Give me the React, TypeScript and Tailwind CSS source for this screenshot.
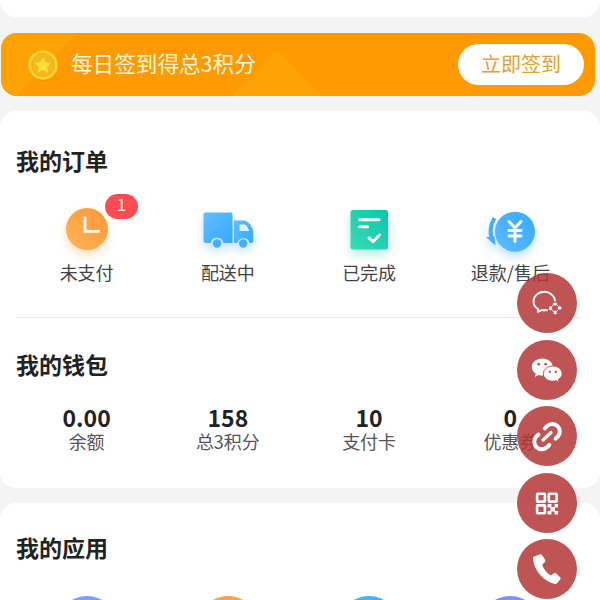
import type { ReactNode } from 'react';

interface OrderEntry {
  label: string;
  icon: ReactNode;
  badge?: number;
}

function ClockIcon() {
  return (
    <svg viewBox="0 0 60 60" className="h-[60px] w-[60px] overflow-visible">
      <defs>
        <linearGradient id="clock" x1="1" y1="0" x2="0" y2="1">
          <stop offset="0" stopColor="#ff9838" />
          <stop offset="1" stopColor="#ffb35a" />
        </linearGradient>
      </defs>
      <circle cx="30" cy="29" r="21" fill="url(#clock)" className="drop-shadow-[0_5px_5px_rgba(255,160,70,0.35)]" />
      <path d="M28 18v13.3h13.5" fill="none" stroke="#fff" strokeWidth="2.8" strokeLinecap="round" />
    </svg>
  );
}

function TruckIcon() {
  return (
    <svg viewBox="0 0 60 60" className="h-[60px] w-[60px] overflow-visible">
      <defs>
        <linearGradient id="truck" x1="0" y1="0" x2="1" y2="1">
          <stop offset="0" stopColor="#62bfff" />
          <stop offset="1" stopColor="#35a9fb" />
        </linearGradient>
      </defs>
      <g className="drop-shadow-[0_5px_5px_rgba(70,170,255,0.35)]">
        <path
          d="M7.5 12.5h25a2 2 0 0 1 2 2V43H25.5a6.5 6.5 0 0 0-12.8 0H7.5a2 2 0 0 1-2-2V14.5a2 2 0 0 1 2-2z"
          fill="url(#truck)"
        />
        <path
          fillRule="evenodd"
          d="M36 20.5h9.5c5 0 9.8 7 9.8 12V41a2 2 0 0 1-2 2h-1.5a6.5 6.5 0 0 0-12.5 0H36zM41.500 24.500v6.500h9.500c-1-4-3-6.500-5.500-6.500z"
          fill="url(#truck)"
        />
        <circle cx="19" cy="43.5" r="4.2" fill="#42afff" />
        <circle cx="45.2" cy="43.5" r="4.2" fill="#42afff" />
      </g>
    </svg>
  );
}

function DoneIcon() {
  return (
    <svg viewBox="0 0 60 60" className="h-[60px] w-[60px] overflow-visible">
      <defs>
        <linearGradient id="done" x1="1" y1="0" x2="0" y2="1">
          <stop offset="0" stopColor="#0fc5a8" />
          <stop offset="1" stopColor="#37dbb9" />
        </linearGradient>
      </defs>
      <rect x="11.5" y="10" width="37.5" height="39.5" rx="2.5" fill="url(#done)" className="drop-shadow-[0_5px_5px_rgba(40,210,175,0.35)]" />
      <path
        d="M20.500 19.700h19.500M20.500 26.800h8M30 37.800l4.200 3.700 6.300-6.500"
        fill="none"
        stroke="#fff"
        strokeWidth="3"
        strokeLinecap="round"
        strokeLinejoin="round"
      />
    </svg>
  );
}

function RefundIcon() {
  return (
    <svg viewBox="0 0 60 60" className="h-[60px] w-[60px] overflow-visible">
      <defs>
        <linearGradient id="refund" x1="1" y1="0" x2="0" y2="1">
          <stop offset="0" stopColor="#38a9fd" />
          <stop offset="1" stopColor="#5bbcff" />
        </linearGradient>
      </defs>
      <g className="drop-shadow-[0_5px_5px_rgba(70,170,255,0.35)]">
        <circle cx="35" cy="31.7" r="20" fill="url(#refund)" />
        <path d="M14.500 18c-4.500 7-5 16-1.800 22.500" fill="none" stroke="#45afff" strokeWidth="4" />
        <path d="M6 37l8.500-.5 1 9z" fill="#45afff" />
      </g>
      <path
        d="M29 21.500l6 6.500 6-6.500M35 28v13.500M29 30.500h12M29 36h12"
        fill="none"
        stroke="#fff"
        strokeWidth="2.9"
        strokeLinecap="round"
      />
    </svg>
  );
}

function CoinIcon() {
  return (
    <svg viewBox="0 0 32 32" className="h-8 w-8">
      <circle cx="16" cy="17.2" r="14.5" fill="#e98c00" opacity="0.5" />
      <circle cx="16" cy="16" r="14.8" fill="#fbd12c" />
      <circle cx="16" cy="16" r="11.3" fill="#f5b824" stroke="#eda91c" />
      <path
        d="M16 8.800l2.300 4.800 5.200.700-3.800 3.600.900 5.200-4.600-2.500-4.600 2.500.900-5.200-3.800-3.600 5.200-.700z"
        fill="#ffdf38"
        stroke="#ffdf38"
        strokeLinejoin="round"
      />
    </svg>
  );
}

function ChatIcon() {
  return (
    <svg viewBox="0 0 60 60" className="h-full w-full" fill="none" stroke="#fff">
      <path
        d="M38 27.500c-.9-5.200-5.300-8.700-10.500-8.700-6.200 0-11 4.300-11 9.700 0 3.200 1.700 5.900 4.600 7.600l-.3 2.700 3.700-1.600h5.500"
        strokeWidth="1.9"
        strokeLinecap="round"
        strokeLinejoin="round"
      />
      <g fill="#fff" stroke="none">
        <ellipse cx="38" cy="31" rx="2.2" ry="1.6" />
        <ellipse cx="33.5" cy="35.3" rx="1.6" ry="2" />
        <ellipse cx="42.6" cy="34.9" rx="2" ry="1.6" />
        <ellipse cx="38.2" cy="39.6" rx="1.6" ry="2" />
      </g>
      <path d="M34.500 33.500l1.800-1.500M40 31.800l1.500 1.700M41.300 36.800l-1.800 1.700M36.700 38.500l-1.900-1.500" strokeWidth="0.9" />
    </svg>
  );
}

function WechatIcon() {
  return (
    <svg viewBox="0 0 60 60" className="h-full w-full" fill="#fff">
      <path d="M25.300 18.500c-5.900 0-10.500 3.800-10.500 8.600 0 2.800 1.500 5.100 4 6.700l-1 3.200 3.700-2c1.300.4 2.400.6 3.800.6 5.900 0 10.500-3.800 10.500-8.500s-4.600-8.600-10.500-8.600z" />
      <path
        d="M35.700 26c-5.200 0-9.300 3.400-9.300 7.600s4.100 7.600 9.300 7.600c1.200 0 2.300-.2 3.300-.5l3.200 1.800-.8-2.900c2.300-1.400 3.700-3.500 3.700-6 0-4.200-4.200-7.600-9.400-7.600z"
        stroke="#c15656"
        strokeWidth="1"
      />
      <g fill="#c15656">
        <circle cx="21.7" cy="24.2" r="1.4" />
        <circle cx="28.7" cy="24.2" r="1.4" />
        <circle cx="32.7" cy="31.8" r="1.2" />
        <circle cx="38.8" cy="31.8" r="1.2" />
      </g>
    </svg>
  );
}

function LinkIcon() {
  return (
    <svg viewBox="0 0 60 60" className="h-full w-full" fill="none" stroke="#fff" strokeWidth="4" strokeLinecap="round">
      <path d="M27.800 22.300l2.400-2.400a7.500 7.500 0 0 1 10.600 10.600l-2.200 2.200" />
      <path d="M21.500 28.500l-2.200 2.200a7.500 7.500 0 0 0 10.600 10.600l2.400-2.400" />
      <path d="M26 34l8-7.500" strokeWidth="3.2" />
    </svg>
  );
}

function QrIcon() {
  return (
    <svg viewBox="0 0 60 60" className="h-full w-full">
      <g fill="none" stroke="#fff" strokeWidth="2.6">
        <rect x="20.1" y="20.8" width="7.8" height="7.8" rx="0.5" />
        <rect x="31.8" y="20.8" width="7.8" height="7.8" rx="0.5" />
        <rect x="20.1" y="32.4" width="7.8" height="7.8" rx="0.5" />
      </g>
      <path
        fill="#fff"
        d="M30.500 31h4v3.500h-4zM37.500 31h3.500v3.500h-3.500zM33.500 34h4.500v4.500h-4.500zM30.500 38h4v3.500h-4zM37.500 38h3.500v3.500h-3.500z"
      />
    </svg>
  );
}

function PhoneIcon() {
  return (
    <svg viewBox="0 0 60 60" className="h-full w-full" fill="#fff">
      <path d="M17 17.500l6.300-2.300c.6-.2 1.200 0 1.500.6l3.500 5.300c.4.600.3 1.200-.2 1.700l-3 2.900c1.800 4.700 4.600 8.200 8.800 10.800l3.300-2.300c.6-.4 1.300-.4 1.800.1l4.300 4.200c.5.500.5 1.200.1 1.800l-3.600 4.200c-.5.600-1.300.7-2.100.5C25.800 41.300 16.800 31.500 16 19.200c-.1-.8.300-1.400 1-1.700z" />
    </svg>
  );
}

const orders: OrderEntry[] = [
  { label: '未支付', icon: <ClockIcon />, badge: 1 },
  { label: '配送中', icon: <TruckIcon /> },
  { label: '已完成', icon: <DoneIcon /> },
  { label: '退款/售后', icon: <RefundIcon /> },
];

const wallet = [
  { value: '0.00', label: '余额' },
  { value: '158', label: '总3积分' },
  { value: '10', label: '支付卡' },
  { value: '0', label: '优惠券' },
];

const apps = ['bg-[#809dfb]', 'bg-[#ffa04a]', 'bg-[#42b2fb]', 'bg-[#8190f8]'];

const contacts = [
  { name: 'chat', icon: <ChatIcon /> },
  { name: 'wechat', icon: <WechatIcon /> },
  { name: 'link', icon: <LinkIcon /> },
  { name: 'qrcode', icon: <QrIcon /> },
  { name: 'phone', icon: <PhoneIcon /> },
];

function SectionTitle({ children }: { children: ReactNode }) {
  return <h2 className="text-[23px] leading-8 font-bold text-[#222]">{children}</h2>;
}

export default function App() {
  return (
    <div className="relative flex h-[600px] w-[600px] flex-col overflow-hidden bg-[#f4f4f4] font-['Noto_Sans_CJK_SC',sans-serif]">
      <div className="h-[17px] shrink-0 rounded-b-2xl bg-white" />

      {/* Daily check-in banner */}
      <div className="relative mt-4 mr-[5px] ml-px flex h-[63px] shrink-0 items-center overflow-hidden rounded-2xl bg-[#ff9a03] pr-[11px] pl-[26px]">
        <svg viewBox="0 0 594 63" className="absolute inset-0 h-full w-full" fill="#ffa206">
          <path d="M0 0h76L15 63H0zM231 63l45-46 45 46z" />
        </svg>
        <div className="relative flex flex-1 items-center">
          <CoinIcon />
          <span className="ml-3 pb-[3px] text-[21.6px] leading-8 text-[#fff6d8]">每日签到得总3积分</span>
        </div>
        <button type="button" className="relative h-[41px] w-[126px] rounded-full bg-white pb-px text-[20px] leading-8 text-[#e5a02c]">
          立即签到
        </button>
      </div>

      {/* Orders and wallet */}
      <section className="mt-[15px] h-[377px] shrink-0 rounded-2xl bg-white pt-[33px] pr-[19px] pl-4">
        <SectionTitle>我的订单</SectionTitle>
        <div className="mt-6 grid grid-cols-4">
          {orders.map((order) => (
            <div key={order.label} className="relative flex flex-col items-center">
              {order.icon}
              <span className="text-[18px] leading-6 text-[#444]">{order.label}</span>
              {order.badge && (
                <span className="absolute -top-[6px] left-[89px] h-[25px] w-[33px] rounded-full bg-[#ff4c50] text-center text-base leading-[21px] text-white">
                  {order.badge}
                </span>
              )}
            </div>
          ))}
        </div>
        <div className="mt-[33px] mb-[30px] h-px bg-[#e8e8e8]" />
        <SectionTitle>我的钱包</SectionTitle>
        <div className="mt-[25px] grid grid-cols-4">
          {wallet.map((item) => (
            <div key={item.label} className="flex flex-col items-center">
              <span className="text-[23px] leading-6 font-bold text-[#222]">{item.value}</span>
              <span className="text-[18px] leading-6 text-[#555]">{item.label}</span>
            </div>
          ))}
        </div>
      </section>

      {/* Apps */}
      <section className="mt-[15px] h-[200px] shrink-0 rounded-t-2xl bg-white pt-7 pr-[19px] pl-4">
        <SectionTitle>我的应用</SectionTitle>
        <div className="mt-[33px] grid grid-cols-4 justify-items-center">
          {apps.map((color) => (
            <div key={color} className={`h-[60px] w-[60px] rounded-full ${color}`} />
          ))}
        </div>
      </section>

      {/* Floating contact buttons */}
      <div className="absolute top-[273px] right-[23px] flex flex-col gap-[6.5px]">
        {contacts.map((contact) => (
          <button key={contact.name} type="button" className="h-[60px] w-[60px] rounded-full bg-[rgba(180,54,54,0.85)]">
            {contact.icon}
          </button>
        ))}
      </div>
    </div>
  );
}
